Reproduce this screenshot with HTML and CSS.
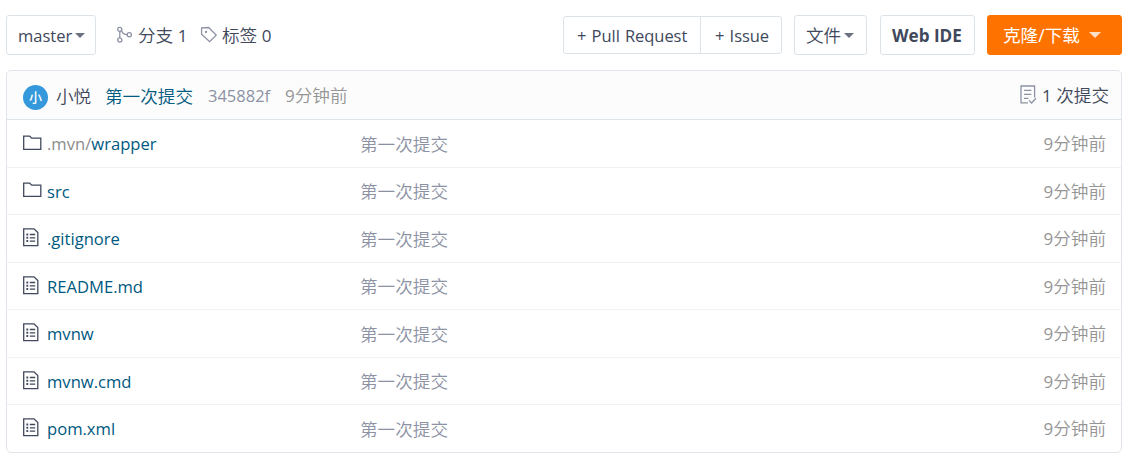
FILE: index.html
```html
<!DOCTYPE html>
<html lang="zh-CN">
<head>
    <meta charset="UTF-8">
    <meta name="viewport" content="width=device-width, initial-scale=1.0">
    <title>仓库文件</title>
    <link rel="stylesheet" href="styles.css">
</head>
<body>
    <svg class="sprite" width="0" height="0">
        <symbol id="folder" viewBox="0 0 19 16">
            <path d="M.7 14.3V1.2H6.7L8.7 3.2H17.8V14.3Z"/>
        </symbol>
        <symbol id="file" viewBox="0 0 16 19">
            <path d="M.7 .8H11L14.8 4.6V17.6H.7Z"/>
            <path d="M6.8 6.5H12.2M6.8 9.8H12.2M6.8 13.1H12.2"/>
            <path class="dots" d="M3.4 6.5H5.2M3.4 9.8H5.2M3.4 13.1H5.2"/>
        </symbol>
    </svg>
    <div class="toolbar">
        <button type="button" class="btn branch-btn">master <i class="caret"></i></button>
        <a class="stat branches">
            <svg class="icon" width="17" height="18" viewBox="0 0 17 18"><circle cx="3.8" cy="3.4" r="2.1"/><circle cx="3.8" cy="14" r="2.1"/><circle cx="13.3" cy="8.7" r="2.1"/><path d="M3.8 5.5V11.9M5.4 4.8L7.2 7.4Q7.8 8.4 11.2 8.6"/></svg>
            <span>分支 <b>1</b></span>
        </a>
        <a class="stat tags">
            <svg class="icon" width="17" height="18" viewBox="0 0 17 18"><path d="M1.6 1.8L8.7 1.5L16.2 9.1L9.6 15.7L1.6 8.3Z"/><circle cx="6" cy="6" r=".5"/></svg>
            <span>标签 <b>0</b></span>
        </a>
        <div class="actions">
            <div class="btn-group">
                <button type="button" class="btn pull-btn">+ Pull Request</button>
                <button type="button" class="btn issue-btn">+ Issue</button>
            </div>
            <button type="button" class="btn file-btn">文件<i class="caret"></i></button>
            <button type="button" class="btn ide-btn">Web IDE</button>
            <button type="button" class="btn clone-btn">克隆/下载<i class="caret"></i></button>
        </div>
    </div>

    <div class="tree">
        <div class="commit">
            <span class="avatar">小</span>
            <span class="author">小悦</span>
            <a class="message">第一次提交</a>
            <span class="sha">345882f</span>
            <span class="age"><b>9</b>分钟前</span>
            <a class="count">
                <svg class="icon" width="17" height="20" viewBox="0 0 17 20"><path d="M8 17.8H1V1H14.6V12.6M4 5.4H11.4M4 9.4H11.4M4 13.4H8.4M9 15.4L11.6 18L16 13.3"/></svg>
                <span><b>1</b> 次提交</span>
            </a>
        </div>
        <div class="row">
            <svg class="folder"><use href="#folder"/></svg>
            <a class="name"><span class="parent">.mvn/</span>wrapper</a>
            <span class="log">第一次提交</span>
            <span class="time"><b>9</b>分钟前</span>
        </div>
        <div class="row">
            <svg class="folder"><use href="#folder"/></svg>
            <a class="name">src</a>
            <span class="log">第一次提交</span>
            <span class="time"><b>9</b>分钟前</span>
        </div>
        <div class="row">
            <svg class="file"><use href="#file"/></svg>
            <a class="name">.gitignore</a>
            <span class="log">第一次提交</span>
            <span class="time"><b>9</b>分钟前</span>
        </div>
        <div class="row">
            <svg class="file"><use href="#file"/></svg>
            <a class="name">README.md</a>
            <span class="log">第一次提交</span>
            <span class="time"><b>9</b>分钟前</span>
        </div>
        <div class="row">
            <svg class="file"><use href="#file"/></svg>
            <a class="name">mvnw</a>
            <span class="log">第一次提交</span>
            <span class="time"><b>9</b>分钟前</span>
        </div>
        <div class="row">
            <svg class="file"><use href="#file"/></svg>
            <a class="name">mvnw.cmd</a>
            <span class="log">第一次提交</span>
            <span class="time"><b>9</b>分钟前</span>
        </div>
        <div class="row">
            <svg class="file"><use href="#file"/></svg>
            <a class="name">pom.xml</a>
            <span class="log">第一次提交</span>
            <span class="time"><b>9</b>分钟前</span>
        </div>
    </div>
</body>
</html>
```
FILE: styles.css
```css
* {
    box-sizing: border-box;
}
body {
    margin: 0;
    padding: 15px 16px 0 6px;
    background-color: #fff;
    color: #40485b;
    font-family: "Open Sans", "Noto Sans CJK SC", sans-serif;
    font-size: 17.6px;
    font-weight: 350;
    line-height: 24px;
    white-space: nowrap;
}
b {
    font-size: 17px;
    font-weight: 400;
}
.sprite {
    position: absolute;
}
svg {
    fill: none;
    stroke: #40485b;
    stroke-width: 1.3;
    flex: none;
}
.icon {
    stroke: #8c92a4;
}
.dots {
    stroke-width: 2;
}
.toolbar {
    display: flex;
    align-items: center;
    height: 40px;
}
.btn {
    display: flex;
    align-items: center;
    height: 40px;
    padding: 0 11px;
    border: 1px solid #dce3e8;
    border-radius: 3px;
    background-color: #fff;
    color: #40485b;
    font: inherit;
    font-size: 16.5px;
    font-weight: 380;
}
.caret {
    margin-left: 4px;
    border: 5px solid transparent;
    border-top-color: #6b7180;
    border-bottom: 0;
}
.branch-btn {
    width: 90px;
    padding-top: 1px;
}
.branch-btn .caret {
    margin-left: 3px;
}
.stat {
    display: flex;
    align-items: center;
    gap: 5px;
}
.branches {
    width: 84px;
    margin-left: 20px;
}
.actions {
    display: flex;
    align-items: center;
    gap: 12px;
    margin-left: auto;
}
.btn-group {
    display: flex;
}
.btn-group .btn {
    height: 38px;
    padding: 1px 12px 0 13px;
    word-spacing: 1px;
    letter-spacing: -.06px;
}
.pull-btn {
    width: 138px;
    border-radius: 3px 0 0 3px;
}
.issue-btn {
    width: 82px;
    margin-left: -1px;
    border-radius: 0 3px 3px 0;
}
.btn-group .issue-btn {
    padding-left: 14px;
}
.file-btn {
    width: 73px;
    margin-right: 1px;
    font-size: 17.6px;
    font-weight: 350;
}
.file-btn .caret {
    margin-left: 3px;
}
.ide-btn {
    width: 95px;
    padding-top: 1px;
    font-size: 17.1px;
    font-weight: 700;
}
.clone-btn {
    width: 135px;
    padding: 0 15px;
    border-color: #fe7300;
    background-color: #fe7300;
    color: #fff;
    font-size: 17.6px;
}
.clone-btn .caret {
    margin-left: 9px;
    border-width: 6px 6px 0;
    border-top-color: #ffe0c7;
}
.tree {
    margin-top: 15px;
    border: 1px solid #dfe5ea;
    border-radius: 5px;
    overflow: hidden;
}
.commit {
    display: flex;
    align-items: center;
    height: 49px;
    padding: 1px 12px 0 16px;
    border-bottom: 1px solid #dce3e8;
    background-color: #fcfcfc;
}
.avatar {
    width: 25px;
    height: 25px;
    margin: 3px 8px 0 0;
    border-radius: 50%;
    background-color: #3498db;
    color: #fff;
    font-size: 13px;
    font-weight: 500;
    line-height: 24px;
    text-align: center;
}
.author {
    width: 49px;
}
.message {
    width: 103px;
    color: #005980;
}
.sha {
    width: 77px;
    color: #8c92a4;
    font-size: 16.5px;
    font-weight: 400;
}
.age {
    color: #959595;
}
.count {
    display: flex;
    align-items: center;
    gap: 5px;
    margin-left: auto;
}
.count .icon {
    margin-top: -2px;
}
.row {
    display: grid;
    grid-template-columns: 24px 313px 1fr auto;
    align-items: center;
    height: 47.5px;
    padding: 1px 15px 0 16px;
    border-bottom: 1px solid #f0f3f6;
}
.row:last-child {
    height: 46.5px;
    border-bottom: 0;
}
.folder {
    width: 19px;
    height: 16px;
    margin-top: -2px;
}
.file {
    width: 16px;
    height: 19px;
    margin-top: -2px;
}
.name {
    padding-top: 1px;
    color: #005980;
    font-size: 16.6px;
    font-weight: 380;
}
.parent {
    color: #8c8c8c;
}
.log {
    color: #8c92a4;
}
.time {
    color: #959595;
}
```
